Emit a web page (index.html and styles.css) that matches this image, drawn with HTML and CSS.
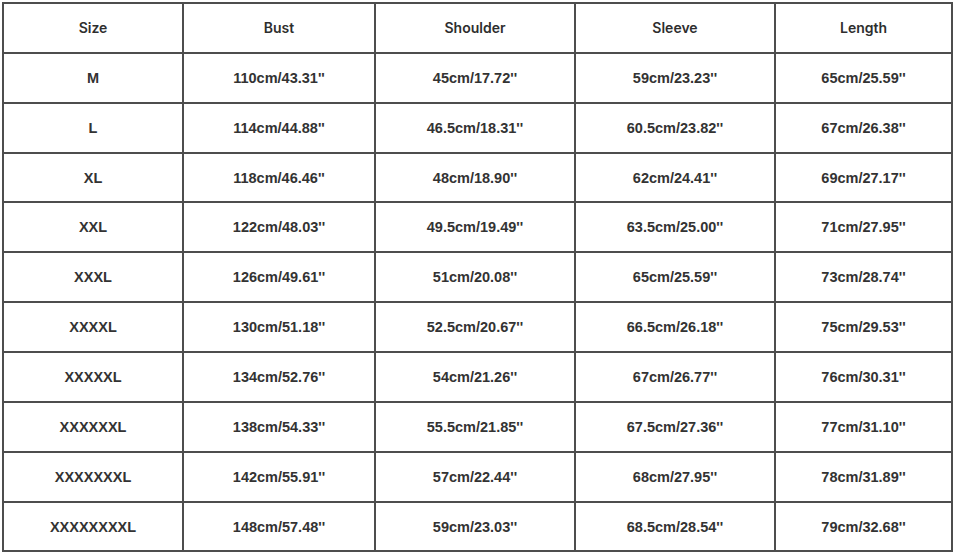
FILE: index.html
```html
<!DOCTYPE html>
<html>
<head>
<meta charset="utf-8">
<link rel="stylesheet" href="styles.css">
</head>
<body>
<table class="size-table">
  <colgroup>
    <col class="c1"><col class="c2"><col class="c3"><col class="c4"><col class="c5">
  </colgroup>
  <thead>
    <tr><th>Size</th><th>Bust</th><th>Shoulder</th><th>Sleeve</th><th>Length</th></tr>
  </thead>
  <tbody>
    <tr><td>M</td><td>110cm/43.31''</td><td>45cm/17.72''</td><td>59cm/23.23''</td><td>65cm/25.59''</td></tr>
    <tr><td>L</td><td>114cm/44.88''</td><td>46.5cm/18.31''</td><td>60.5cm/23.82''</td><td>67cm/26.38''</td></tr>
    <tr><td>XL</td><td>118cm/46.46''</td><td>48cm/18.90''</td><td>62cm/24.41''</td><td>69cm/27.17''</td></tr>
    <tr><td>XXL</td><td>122cm/48.03''</td><td>49.5cm/19.49''</td><td>63.5cm/25.00''</td><td>71cm/27.95''</td></tr>
    <tr><td>XXXL</td><td>126cm/49.61''</td><td>51cm/20.08''</td><td>65cm/25.59''</td><td>73cm/28.74''</td></tr>
    <tr><td>XXXXL</td><td>130cm/51.18''</td><td>52.5cm/20.67''</td><td>66.5cm/26.18''</td><td>75cm/29.53''</td></tr>
    <tr><td>XXXXXL</td><td>134cm/52.76''</td><td>54cm/21.26''</td><td>67cm/26.77''</td><td>76cm/30.31''</td></tr>
    <tr><td>XXXXXXL</td><td>138cm/54.33''</td><td>55.5cm/21.85''</td><td>67.5cm/27.36''</td><td>77cm/31.10''</td></tr>
    <tr><td>XXXXXXXL</td><td>142cm/55.91''</td><td>57cm/22.44''</td><td>68cm/27.95''</td><td>78cm/31.89''</td></tr>
    <tr><td>XXXXXXXXL</td><td>148cm/57.48''</td><td>59cm/23.03''</td><td>68.5cm/28.54''</td><td>79cm/32.68''</td></tr>
  </tbody>
</table>
</body>
</html>
```
FILE: styles.css
```css
html, body {
  margin: 0;
  padding: 0;
  background: #ffffff;
}
body {
  padding: 2px;
}
.size-table {
  border-collapse: collapse;
  table-layout: fixed;
  width: 949px;
  color: #333333;
}
.c1 { width: 180px; }
.c2 { width: 192px; }
.c3 { width: 200px; }
.c4 { width: 200px; }
.c5 { width: 177px; }
.size-table th,
.size-table td {
  border: 2px solid #4d4d4d;
  height: 47.86px;
  padding: 0;
  box-sizing: border-box;
  text-align: center;
  vertical-align: middle;
}
.size-table tr {
  height: 49.86px;
}
.size-table th {
  font-family: "Inter", "Liberation Sans", sans-serif;
  font-weight: 600;
  font-size: 14px;
  color: #2e2e2e;
}
.size-table td {
  font-family: "Liberation Sans", Arial, sans-serif;
  font-weight: bold;
  font-size: 14.5px;
}
```
